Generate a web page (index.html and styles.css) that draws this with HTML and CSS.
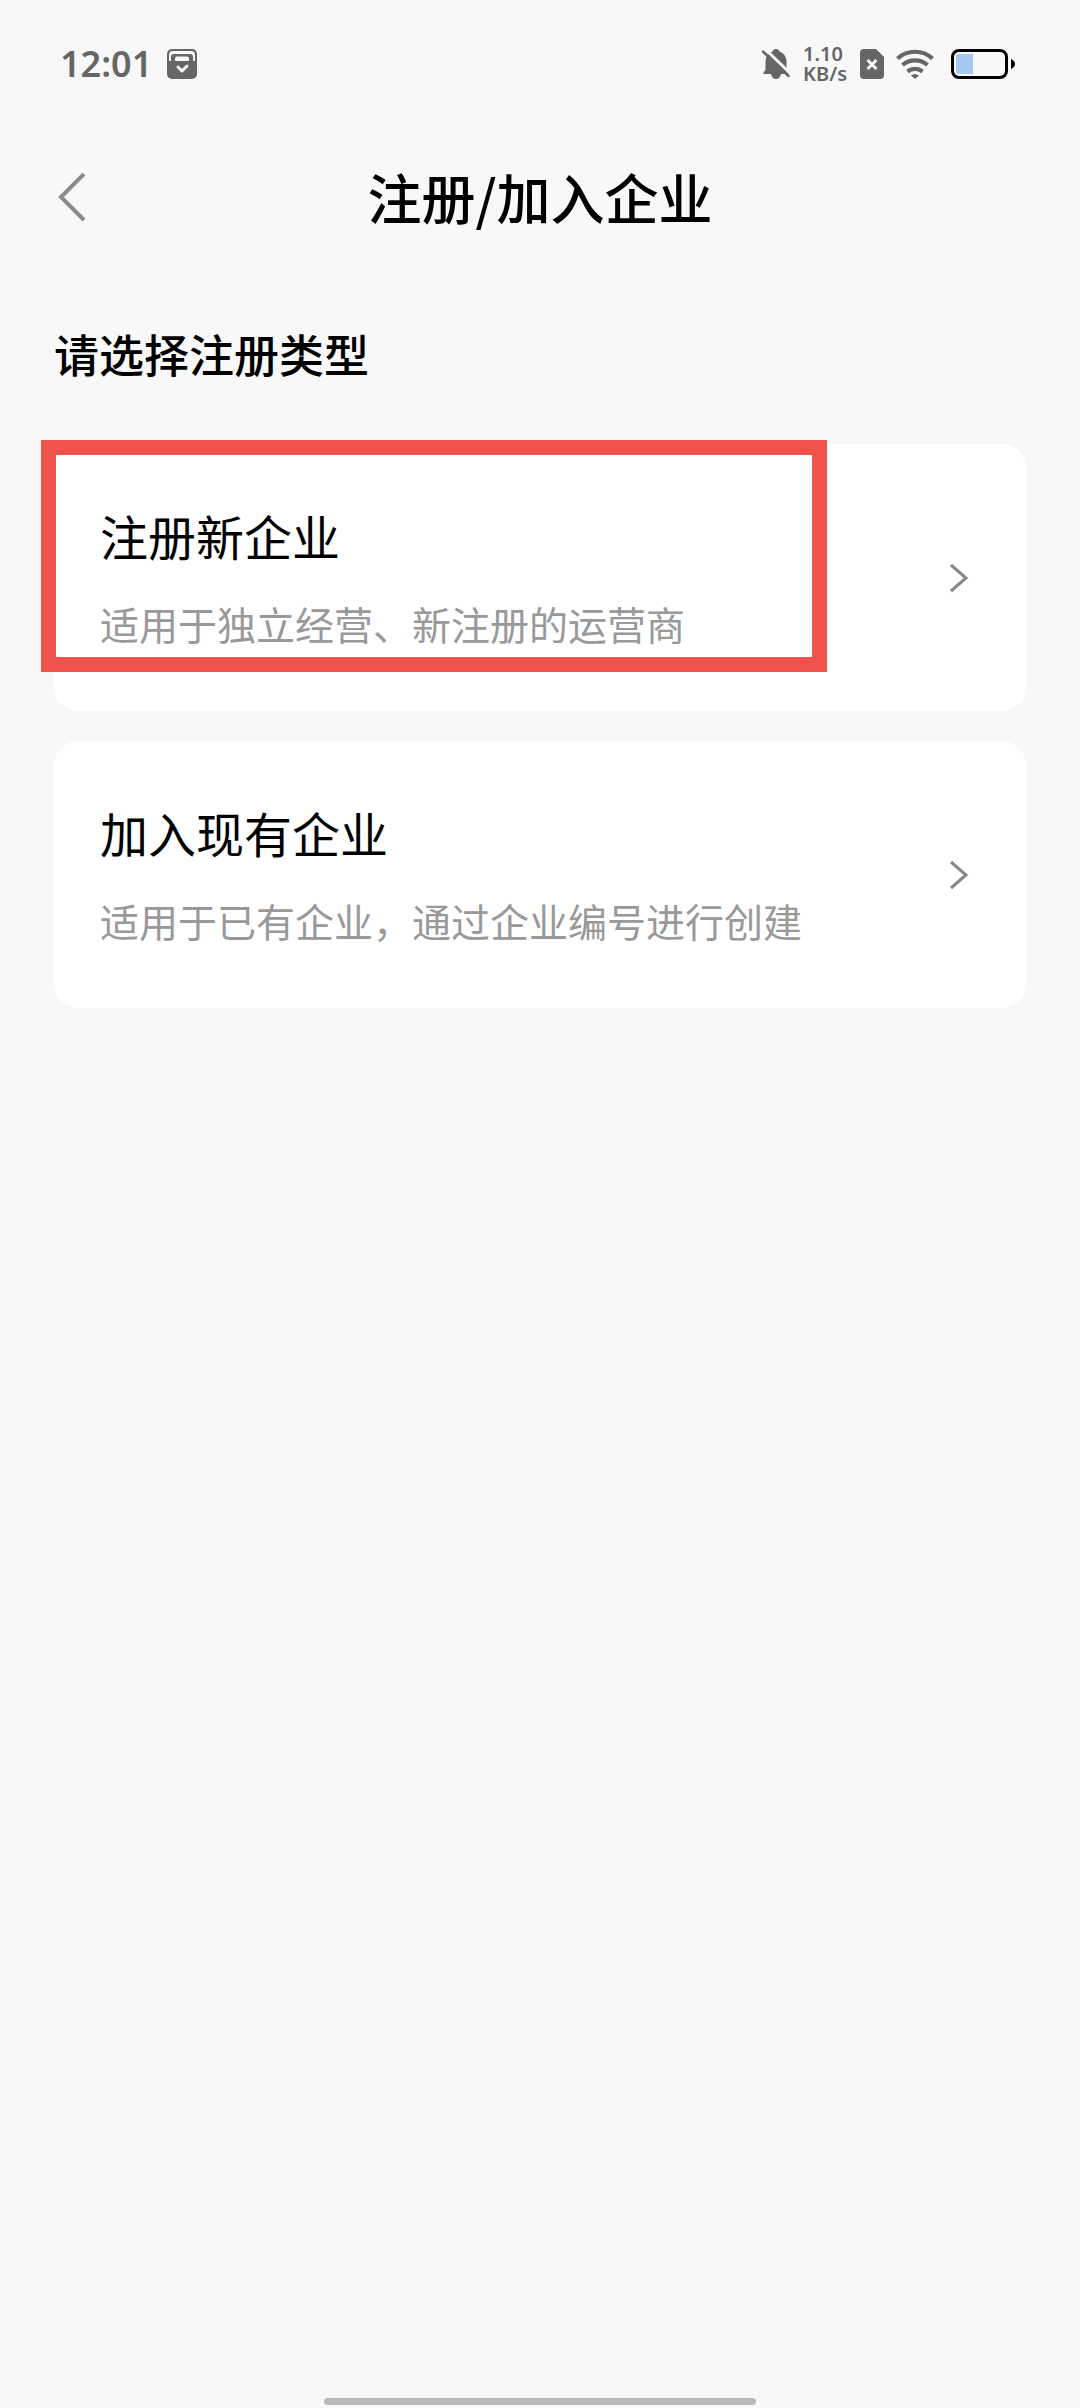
FILE: index.html
```html
<!DOCTYPE html>
<html lang="zh-CN">
<head>
  <meta charset="UTF-8" />
  <meta name="viewport" content="width=device-width, initial-scale=1.0"/>
  <title>注册/加入企业</title>
  <link rel="stylesheet" href="styles.css">
</head>
<body>
  <div class="status-bar">
    <div class="status-left">
      <span class="clock">12:01</span>
      <svg width="30" height="30" viewBox="0 0 30 30">
        <rect width="30" height="30" rx="5" fill="#666"/>
        <path d="M2 12V6a4 4 0 0 1 4-4h18a4 4 0 0 1 4 4v6h-2V8a3 3 0 0 0-3-3H7a3 3 0 0 0-3 3v4z" fill="#f8f8f8"/>
        <path d="M8 12V9.500a2 2 0 0 1 2-2h10a2 2 0 0 1 2 2V12z" fill="#f8f8f8"/>
        <path d="M11 18l4 4 5-5" fill="none" stroke="#f8f8f8" stroke-width="3" stroke-linecap="round" stroke-linejoin="round"/>
      </svg>
    </div>
    <div class="status-right">
      <svg width="28" height="30" viewBox="0 0 28 30">
        <path d="M3.500 21V12a11 11 0 0 1 7-9.500Q11 0 14 0t3.500 2.500a11 11 0 0 1 7 9.500v9l2 4h-25v-1.500zM9 25h10q-1 5-5 5t-5-5z" fill="#666"/>
        <path d="M3 0L29 25" stroke="#f8f8f8" stroke-width="3"/>
        <path d="M1 2.500L26.500 27" stroke="#666" stroke-width="2.500" stroke-linecap="round"/>
      </svg>
      <div class="net-speed"><span>1.10</span><span>KB/s</span></div>
      <svg class="sim" width="24" height="30" viewBox="0 0 24 30">
        <path d="M4 0h12l8 8v18a4 4 0 0 1-4 4H4a4 4 0 0 1-4-4V4a4 4 0 0 1 4-4z" fill="#666"/>
        <path d="M7.500 11l9 9M16.500 11l-9 9" stroke="#f8f8f8" stroke-width="3"/>
      </svg>
      <svg class="wifi" width="38" height="30" viewBox="0 0 38 30" fill="none" stroke="#666" stroke-width="4.200">
        <path d="M1.500 9.500a26 26 0 0 1 35 0"/>
        <path d="M6.500 16a19 19 0 0 1 25 0"/>
        <path d="M11.500 22.500a12 12 0 0 1 15 0"/>
        <path d="M15 26.500q4-3 8 0l-4 3.500z" fill="#666" stroke="none"/>
      </svg>
      <svg width="64" height="30" viewBox="0 0 64 30">
        <rect x="1.500" y="1.500" width="54" height="27" rx="6.500" fill="none" stroke="#000" stroke-width="3"/>
        <path d="M8 5h14v20H8a3 3 0 0 1-3-3V8a3 3 0 0 1 3-3z" fill="#a5c8ee"/>
        <path d="M60 10q4 2 4 5t-4 5z" fill="#000"/>
      </svg>
    </div>
  </div>

  <header class="nav-bar">
    <button type="button" class="back" aria-label="返回">
      <svg width="28" height="50" viewBox="0 0 28 50" fill="none" stroke="#8c8c8c" stroke-width="4">
        <path d="M26 2L3 25l23 23"/>
      </svg>
    </button>
    <h1>注册/加入企业</h1>
  </header>

  <main class="content">
    <h2>请选择注册类型</h2>

    <a href="#new" class="card">
      <div class="card-text">
        <h3>注册新企业</h3>
        <p>适用于独立经营、新注册的运营商</p>
      </div>
      <svg width="20" height="32" viewBox="0 0 20 32" fill="none" stroke="#888" stroke-width="3">
        <path d="M2 3l15 13L2 29"/>
      </svg>
      <span class="highlight"></span>
    </a>

    <a href="#join" class="card">
      <div class="card-text">
        <h3>加入现有企业</h3>
        <p>适用于已有企业，通过企业编号进行创建</p>
      </div>
      <svg width="20" height="32" viewBox="0 0 20 32" fill="none" stroke="#888" stroke-width="3">
        <path d="M2 3l15 13L2 29"/>
      </svg>
    </a>
  </main>

  <div class="home-indicator"></div>
</body>
</html>
```
FILE: styles.css
```css
* {
  box-sizing: border-box;
}
body {
  margin: 0;
  min-height: 100vh;
  display: flex;
  flex-direction: column;
  background: #f8f8f8;
  color: #000;
  font-family: "Noto Sans CJK SC", sans-serif;
}
h1, h2, h3, p {
  margin: 0;
}
svg {
  display: block;
  flex: none;
}

/* status bar */
.status-bar {
  height: 128px;
  padding: 0 65px 0 60px;
  display: flex;
  align-items: center;
  justify-content: space-between;
  color: #666;
  font-family: "Noto Sans", sans-serif;
}
.status-left, .status-right {
  display: flex;
  align-items: center;
}
.status-left {
  gap: 15px;
}
.clock {
  font-size: 36px;
  line-height: 40px;
  font-weight: 600;
}
.net-speed {
  margin: 0 13px;
  display: flex;
  flex-direction: column;
  font-size: 20px;
  line-height: 20px;
  font-weight: 600;
}
.wifi {
  margin: 0 17px 0 12px;
}

/* title bar */
.nav-bar {
  position: relative;
  height: 138px;
  display: flex;
  align-items: center;
  justify-content: center;
}
.nav-bar h1 {
  font-size: 54px;
  line-height: 80px;
  font-weight: 500;
}
.back {
  position: absolute;
  left: 58px;
  padding: 0;
  border: none;
  background: none;
  cursor: pointer;
}

.content {
  padding: 48px 54px;
  display: flex;
  flex-direction: column;
  gap: 30px;
}
.content h2 {
  margin-bottom: 20px;
  font-size: 45px;
  line-height: 80px;
  font-weight: 500;
}
.card {
  position: relative;
  padding: 51px 57px 58px 46px;
  display: flex;
  align-items: center;
  justify-content: space-between;
  background: #fff;
  border-radius: 24px;
  color: #000;
  text-decoration: none;
}
.card h3 {
  font-size: 48px;
  line-height: 80px;
  font-weight: 400;
}
.card p {
  margin-top: 18px;
  color: #999;
  font-size: 39px;
  line-height: 60px;
}
.card svg {
  margin-top: 7px;
}

/* red frame over the first card */
.highlight {
  position: absolute;
  top: -4px;
  left: -13px;
  right: 199px;
  height: 232px;
  border: 15px solid #ef534c;
}

.home-indicator {
  width: 40%;
  height: 7px;
  margin: auto auto 3px;
  border-radius: 4px;
  background: #bbb;
}
```
